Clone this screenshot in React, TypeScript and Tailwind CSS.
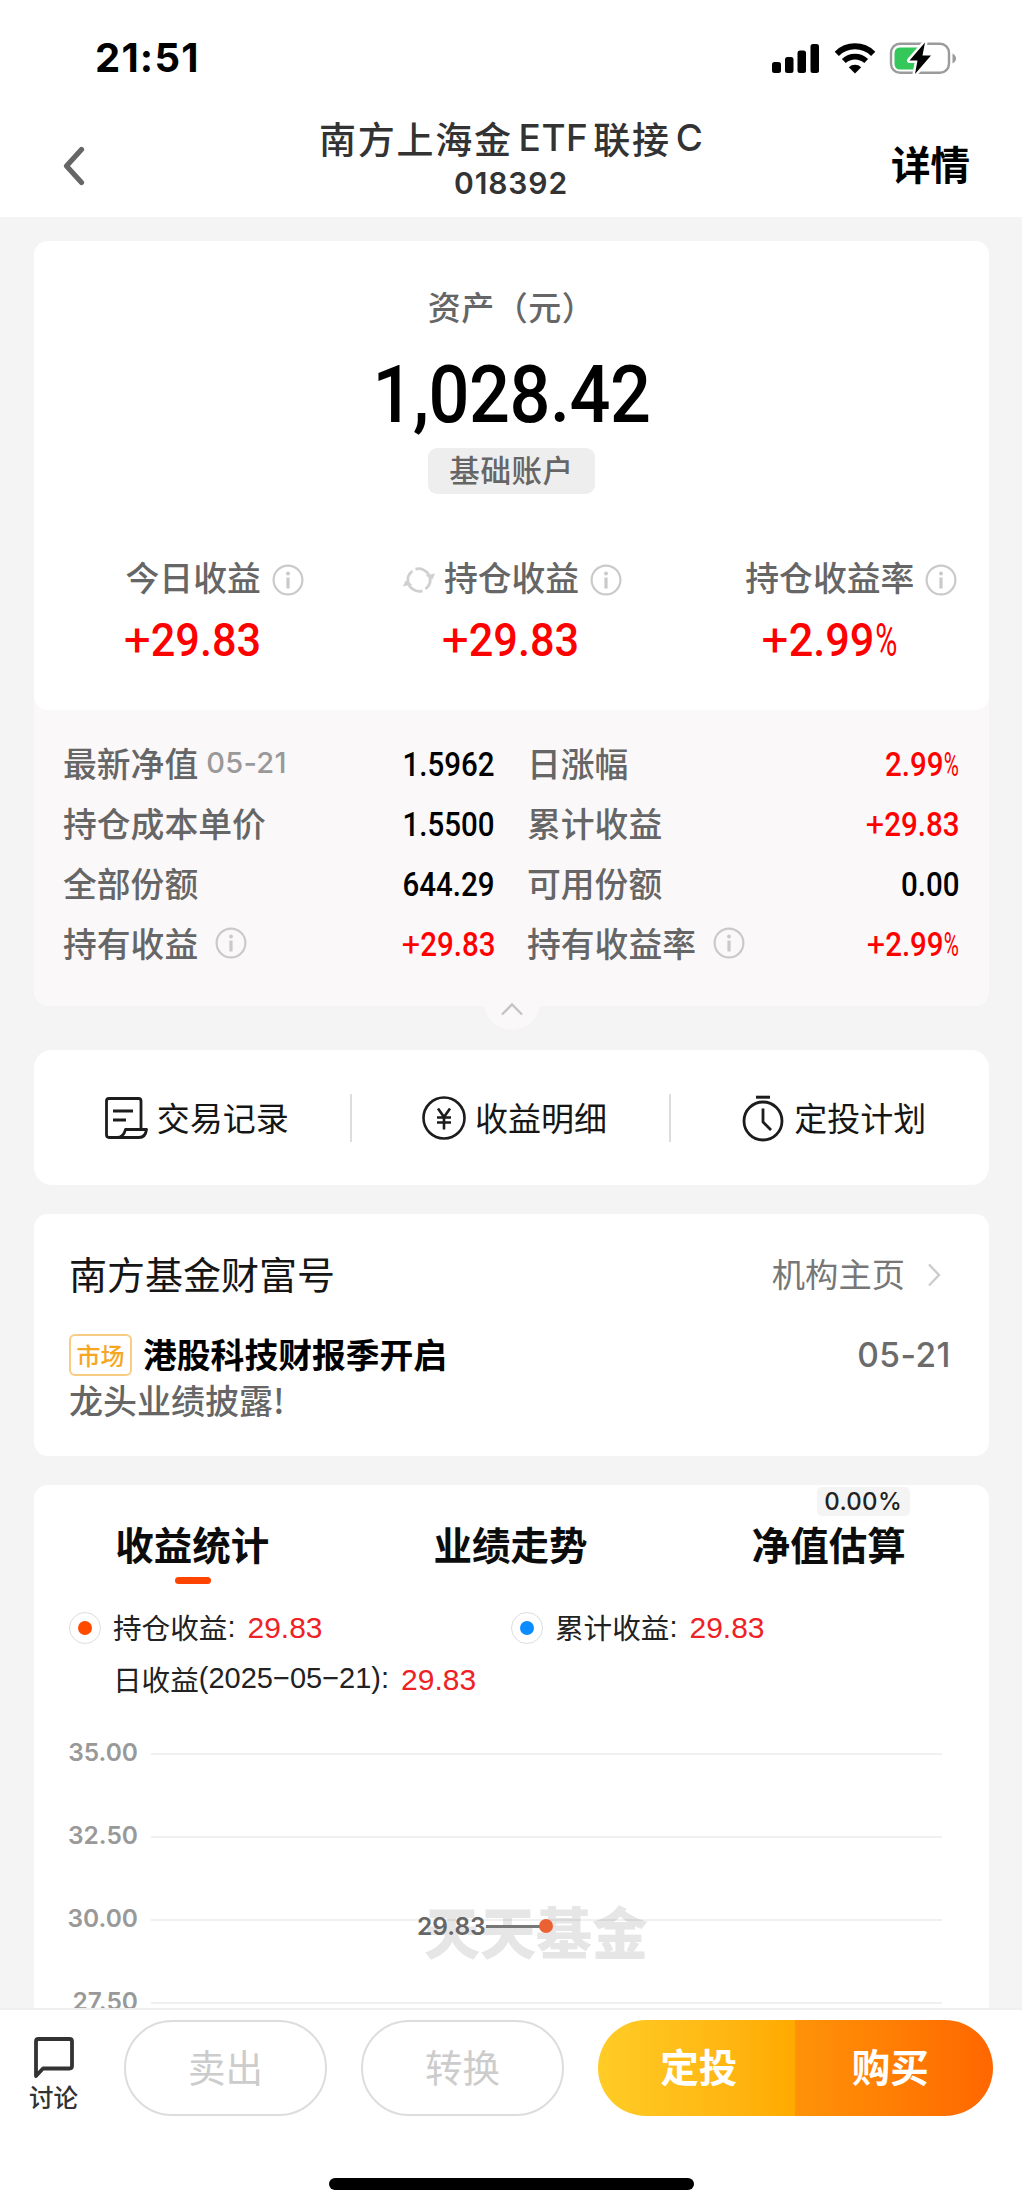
import React from "react";

const CJK = "font-['Noto_Sans_CJK_SC',sans-serif]";
const DIN = "font-[Roboto,sans-serif]";

function InfoIcon({ className = "" }: { className?: string }) {
  return (
    <svg viewBox="0 0 32 32" className={`h-8 w-8 text-[#cacaca] ${className}`} fill="none" stroke="currentColor">
      <circle cx="16" cy="16" r="14.4" strokeWidth="2.2" />
      <path d="M16 13.5V24.5" strokeWidth="3.2" />
      <circle cx="16" cy="9.4" r="2" fill="currentColor" stroke="none" />
    </svg>
  );
}

function RefreshIcon({ className = "" }: { className?: string }) {
  return (
    <svg viewBox="0 0 32 32" className={`h-8 w-8 text-[#d0d0d0] ${className}`} fill="none" stroke="currentColor" strokeWidth="2.800">
      <path d="M5.200 19A11.500 11.500 0 0 1 9.500 7" />
      <path d="M12.500 5.200A11.500 11.500 0 0 1 26 11" />
      <path d="M26.800 13A11.500 11.500 0 0 1 22.500 25" />
      <path d="M19.500 26.800A11.500 11.500 0 0 1 6 21" />
      <path d="M32 9.500 29.500 15.500 22.500 11.500Z" fill="currentColor" stroke="none" />
      <path d="M0 22.500 2.500 16.500 9.500 20.500Z" fill="currentColor" stroke="none" />
    </svg>
  );
}

/* Condensed figures with a light plus sign and a narrow percent sign. */
function Figure({ value }: { value: string }) {
  const plus = value.startsWith("+");
  const percent = value.endsWith("%");
  const digits = value.replace("+", "").replace("%", "");
  return (
    <>
      {plus && <span className="inline-block scale-x-[1.1] pr-[0.03em] font-normal">+</span>}
      {digits}
      {percent && <span className="-mr-[0.1em] -ml-[0.1em] inline-block scale-x-[0.7] font-normal">%</span>}
    </>
  );
}

function StatusBar() {
  return (
    <div className="flex h-[112px] items-start justify-between pl-[95px] pr-[65px]">
      <div className="mt-[36px] text-[40px] leading-[44px] font-bold tracking-[1.2px] text-black">21:51</div>
      <div className="mt-[41px] flex items-center">
        <svg viewBox="0 0 48 32" className="h-8 w-12">
          <rect x="0" y="20" width="9" height="11" rx="2.5" />
          <rect x="13" y="15" width="8.500" height="16" rx="2.500" />
          <rect x="25.500" y="8.500" width="8.500" height="22.500" rx="2.500" />
          <rect x="38.500" y="2" width="8.500" height="29" rx="2.500" />
        </svg>
        <svg viewBox="0 0 42 32" className="ml-[14px] h-8 w-[42px]" fill="none" stroke="black">
          <path d="M2.800 11.800A26 26 0 0 1 39.200 11.800" strokeWidth="6" />
          <path d="M9.800 19A16.500 16.500 0 0 1 32.200 19" strokeWidth="5.600" />
          <path d="M21 31.500 14.800 25.200A9.300 9.300 0 0 1 27.200 25.200Z" fill="black" stroke="none" />
        </svg>
        <svg viewBox="0 0 68 34" className="ml-[13px] h-[34px] w-[68px]">
          <rect x="2" y="2.800" width="58" height="29" rx="9" fill="none" stroke="#9b9b9b" strokeWidth="2.400" />
          <path d="M63.500 12.500V22.500Q67 20.500 67 17.500T63.500 12.500Z" fill="#9b9b9b" />
          <path d="M11 6.500H31V28.500H11Q5.500 28.500 5.500 22.500V12.500Q5.500 6.500 11 6.500Z" fill="#34c759" />
          <path d="M36 1.500 20.500 19.500H28.500L26 33 42 14.500H33.500Z" fill="black" stroke="white" strokeWidth="5" paintOrder="stroke" strokeLinejoin="round" />
        </svg>
      </div>
    </div>
  );
}

function Header() {
  return (
    <div className="flex h-[105px] items-start justify-between pl-[62px] pr-[52px]">
      <div className="w-[190px]">
        <svg viewBox="0 0 24 40" className="mt-[34px] h-10 w-6" fill="none" stroke="#666" strokeWidth="5.200" strokeLinecap="round" strokeLinejoin="round">
          <path d="M19.500 3.500 4.500 20 19.500 36.500" />
        </svg>
      </div>
      <div className="flex flex-col items-center text-[#333]">
        <div className={`${CJK} flex h-[52px] items-center text-[37px] leading-[52px] font-medium tracking-[1.700px]`}>
          南方上海金<span className="ml-[6px] mr-[5px] font-[Inter] text-[37px] font-medium tracking-[0.5px]">ETF</span>联接
          <span className="ml-[5px] font-[Inter] text-[37px] font-medium tracking-normal">C</span>
        </div>
        <div className="mt-[1px] text-[30px] leading-[36px] font-semibold tracking-[0.9px]">018392</div>
      </div>
      <div className={`${CJK} mt-[23px] w-[200px] text-right text-[39.500px] leading-[56px] font-bold text-black`}>详情</div>
    </div>
  );
}

const summary = [
  { label: "今日收益", value: "+29.83", refresh: false },
  { label: "持仓收益", value: "+29.83", refresh: true },
  { label: "持仓收益率", value: "+2.99%", refresh: false },
];

const details = [
  { label: "最新净值", date: "05-21", value: "1.5962" },
  { label: "日涨幅", value: "2.99%", red: true },
  { label: "持仓成本单价", value: "1.5500" },
  { label: "累计收益", value: "+29.83", red: true },
  { label: "全部份额", value: "644.29" },
  { label: "可用份额", value: "0.00" },
  { label: "持有收益", value: "+29.83", red: true, info: true },
  { label: "持有收益率", value: "+2.99%", red: true, info: true },
];

function AssetCard() {
  return (
    <section className="relative mt-6 h-[765px] rounded-[14px] bg-[#fbf8f9]">
      <div className="flex h-[469px] flex-col items-center rounded-[14px] bg-white">
        <div className={`${CJK} mt-[41px] h-[48px] text-[33px] leading-[48px] font-medium tracking-[0.500px] text-[#666]`}>资产（元）</div>
        <div className={`${DIN} mt-[17px] h-[96px] origin-center scale-x-[0.9] text-[80px] leading-[96px] font-medium tracking-[-0.5px] text-black`}>1,028.42</div>
        <div className={`${CJK} mt-[5px] flex h-[46px] w-[167px] items-center justify-center rounded-[9px] bg-[#eee] pb-[5px] text-[30.500px] leading-[40px] font-medium tracking-[0.600px] text-[#666]`}>基础账户</div>
        <div className="mt-[58px] grid w-full grid-cols-3">
          {summary.map((s) => (
            <div key={s.label} className="flex flex-col items-center">
              <div className={`${CJK} relative h-[50px] text-[33.800px] leading-[50px] font-medium whitespace-nowrap text-[#666]`}>
                {s.refresh && <RefreshIcon className="absolute top-[12px] right-full mr-[9px]" />}
                {s.label}
                <InfoIcon className="absolute top-[12px] left-full ml-[11px]" />
              </div>
              <div className={`${DIN} mt-[10px] h-[56px] scale-x-[0.92] text-[47px] leading-[56px] font-medium whitespace-nowrap text-[#ff0000]`}>
                <Figure value={s.value} />
              </div>
            </div>
          ))}
        </div>
      </div>
      <div className="grid grid-cols-[432px_432px] gap-x-[32px] pt-[23px] pl-[29px]">
        {details.map((d) => (
          <div key={d.label} className="flex h-[60px] items-center">
            <span className={`${CJK} text-[33.800px] leading-[50px] font-medium text-[#666]`}>{d.label}</span>
            {d.date && <span className="ml-[8px] text-[29px] leading-[50px] font-medium tracking-[0.300px] text-[#999]">{d.date}</span>}
            {d.info && <InfoIcon className="ml-[17px]" />}
            <span className={`${DIN} mt-[3px] ml-auto origin-right scale-x-[0.88] text-[33.500px] leading-[50px] font-medium whitespace-nowrap ${d.red ? "text-[#ff0000]" : "text-black"}`}>
              <Figure value={d.value} />
            </span>
          </div>
        ))}
      </div>
      <div className="absolute -bottom-[24px] left-[450px] h-[56px] w-[56px] rounded-full bg-[#fbf8f9]">
        <svg viewBox="0 0 24 16" className="mt-[27px] ml-[16px] h-4 w-6" fill="none" stroke="#c4c4c4" strokeWidth="2.400">
          <path d="M2 13.500 12 3.500 22 13.500" />
        </svg>
      </div>
    </section>
  );
}

function RecordIcon() {
  return (
    <svg viewBox="0 0 46 46" className="h-[46px] w-[46px]" fill="none" stroke="#1c1c1c" strokeWidth="2.800" strokeLinejoin="round">
      <path d="M38 33V6Q38 3.500 35.500 3.500H6Q3.500 3.500 3.500 6V39.500Q3.500 42.500 6 42.500H16" />
      <path d="M14 42.500Q20.500 42.500 22.500 34.500H43.500Q42.500 42.500 36 42.500Z" />
      <path d="M10 16H30M10 25H23" />
    </svg>
  );
}

function YenIcon() {
  return (
    <svg viewBox="0 0 46 46" className="h-[46px] w-[46px]" fill="none" stroke="#1c1c1c" strokeWidth="2.600">
      <circle cx="23" cy="23" r="20.500" />
      <path d="M17 13.500 23 22 29 13.500M23 22V34.500M16 22.500H30M16 27.500H30" />
    </svg>
  );
}

function WatchIcon() {
  return (
    <svg viewBox="0 0 46 48" className="h-[48px] w-[46px]" fill="none" stroke="#1c1c1c" strokeWidth="2.800">
      <circle cx="23" cy="27" r="19" />
      <path d="M16 3.200H30" strokeWidth="3" />
      <path d="M23 14.500V28L31 36" />
    </svg>
  );
}

function Actions() {
  const items = [
    { label: "交易记录", icon: <RecordIcon /> },
    { label: "收益明细", icon: <YenIcon /> },
    { label: "定投计划", icon: <WatchIcon /> },
  ];
  return (
    <section className="mt-[44px] grid h-[135px] grid-cols-3 items-center rounded-[18px] bg-white">
      {items.map((it, i) => (
        <div key={it.label} className={`flex h-[48px] items-center justify-center border-[#ddd] pl-[7px] ${i < 2 ? "border-r-[2px]" : ""}`}>
          {it.icon}
          <span className={`${CJK} -mt-[2px] ml-[8px] text-[33px] leading-[48px] text-[#161616]`}>{it.label}</span>
        </div>
      ))}
    </section>
  );
}

function NewsCard() {
  return (
    <section className="mt-[29px] h-[242px] rounded-[14px] bg-white pr-[38px] pl-[35px]">
      <div className="flex h-[120px] items-center justify-between">
        <span className={`${CJK} -mt-[2px] text-[38px] leading-[56px] text-[#161616]`}>南方基金财富号</span>
        <span className="flex items-center">
          <span className={`${CJK} -mt-[2px] text-[33.300px] leading-[48px] text-[#777]`}>机构主页</span>
          <svg viewBox="0 0 16 26" className="mt-[2px] mr-[9px] ml-[21px] h-[26px] w-4" fill="none" stroke="#ccc" strokeWidth="2.400">
            <path d="M3 2.500 13 13 3 23.500" />
          </svg>
        </span>
      </div>
      <div className="flex h-[42px] items-center">
        <span className={`${CJK} flex h-[42px] w-[63px] items-center justify-center rounded-[6px] border-[2px] border-[#f8cc85] text-[24px] leading-[36px] font-medium text-[#f5a623]`}>市场</span>
        <span className={`${CJK} -mt-[2px] ml-[11px] text-[33.800px] leading-[48px] font-bold text-black`}>港股科技财报季开启</span>
        <span className="ml-auto text-[33.500px] leading-[40px] font-medium tracking-[0.5px] text-[#6b6b6b]">05-21</span>
      </div>
      <div className={`${CJK} text-[34px] leading-[48px] font-medium text-[#666]`}>龙头业绩披露!</div>
    </section>
  );
}

function Legend({ color, label, value }: { color: string; label: string; value: string }) {
  return (
    <div className="flex h-[48px] items-center">
      <span className="flex h-[32px] w-[32px] items-center justify-center rounded-full border-[1.500px] border-[#ddd]">
        <span className={`h-[14px] w-[14px] rounded-full ${color}`} />
      </span>
      <span className={`${CJK} -mt-[2px] ml-[12px] text-[28.600px] leading-[44px] text-[#222]`}>{label}</span>
      <span className="-mt-[1px] font-['Liberation_Sans'] text-[29px] text-[#222]">:</span>
      <span className="-mt-[2px] ml-[12px] font-['Liberation_Sans'] text-[30px] text-[#ee2226]">{value}</span>
    </div>
  );
}

function ChartCard() {
  const tabs = ["收益统计", "业绩走势", "净值估算"];
  const ticks = ["35.00", "32.50", "30.00", "27.50"];
  return (
    <section className="mt-[29px] h-[523px] overflow-hidden rounded-t-[14px] bg-white">
      <div className="grid grid-cols-3 pt-[30px]">
        {tabs.map((t, i) => (
          <div key={t} className="relative flex flex-col items-center">
            {i === 2 && (
              <span className="absolute -top-[28px] left-[146px] flex h-[29px] w-[93px] items-center justify-center rounded-[5px] bg-[#f4f4f4] text-[24px] leading-[28px] font-medium tracking-[0.300px] text-[#222]">0.00%</span>
            )}
            <span className={`${CJK} -ml-[2px] h-[62px] text-[38.500px] leading-[56px] font-bold text-[#0c0c0c]`}>{t}</span>
            {i === 0 && <span className="h-[7px] w-[36px] rounded-full bg-[#ff4400]" />}
          </div>
        ))}
      </div>
      <div className="mt-[20px] grid grid-cols-[442px_1fr] pl-[35px]">
        <Legend color="bg-[#ff4b00]" label="持仓收益" value="29.83" />
        <Legend color="bg-[#0a8cff]" label="累计收益" value="29.83" />
      </div>
      <div className="mt-[3px] flex h-[48px] items-center pl-[79px] font-['Liberation_Sans'] text-[29px] text-[#222]">
        <span className={`${CJK} text-[28.600px] leading-[44px]`}>日收益</span>
        <span>(2025−05−21):</span>
        <span className="ml-[12px] text-[30px] text-[#ee2226]">29.83</span>
      </div>
      <div className="relative mt-[30px]">
        <div className={`${CJK} absolute top-[157px] left-[390px] text-[56px] leading-[80px] font-black text-[#e6e6e6]`}>天天基金</div>
        {ticks.map((t) => (
          <div key={t} className="relative flex h-[83px] items-start">
            <span className="w-[104px] text-right text-[24.500px] leading-[38px] font-semibold text-[#999]">{t}</span>
            <span className="mt-[20px] ml-[13px] h-[2px] w-[791px] bg-black/6" />
          </div>
        ))}
        <div className="absolute top-[174px] left-[383px] flex items-center">
          <span className="text-[24.500px] leading-[38px] font-semibold text-[#666]">29.83</span>
          <span className="h-[3px] w-[54px] bg-[#777]" />
          <span className="-ml-[1px] h-[14px] w-[14px] rounded-full bg-[#eb6133]" />
        </div>
      </div>
    </section>
  );
}

function BottomBar() {
  return (
    <div className="relative flex h-[202px] flex-col items-center border-t-2 border-[#f0f0f0] bg-white">
      <div className="flex w-full pt-[10px]">
        <div className="flex w-[124px] flex-col pl-[29px] pt-[15px]">
          <svg viewBox="0 0 46 46" className="ml-[2px] h-[46px] w-[46px]" fill="none" stroke="#333" strokeWidth="3.800" strokeLinejoin="round">
            <path d="M5 41V6.500Q5 4 7.500 4H38.500Q41 4 41 6.500V31Q41 33.500 38.500 33.500H12Z" />
          </svg>
          <span className={`${CJK} -mt-[1px] text-[24.500px] leading-[34px] font-medium text-[#333]`}>讨论</span>
        </div>
        <div className={`${CJK} flex h-[96px] w-[203px] items-center justify-center rounded-full border-2 border-[#ddd] pb-[4px] text-[37.500px] text-[#ccc]`}>卖出</div>
        <div className={`${CJK} ml-[34px] flex h-[96px] w-[203px] items-center justify-center rounded-full border-2 border-[#ddd] pb-[4px] text-[37.500px] text-[#ccc]`}>转换</div>
        <div className={`${CJK} ml-[34px] flex h-[96px] w-[395px] overflow-hidden rounded-full text-[38.500px] font-bold text-white`}>
          <div className="flex flex-1 items-center justify-center bg-linear-to-r from-[#ffcc25] to-[#ffaa00] pb-[4px] pl-[5px]">定投</div>
          <div className="flex flex-1 items-center justify-center bg-linear-to-r from-[#ff9308] to-[#ff6600] pr-[7px] pb-[4px]">购买</div>
        </div>
      </div>
      <div className="mt-[62px] h-[12px] w-[365px] rounded-full bg-black" />
    </div>
  );
}

export default function App() {
  return (
    <div className="h-[2210px] w-[1022px] overflow-hidden bg-[#f4f4f4] font-[Inter,'Noto_Sans_CJK_SC',sans-serif]">
      <div className="bg-white">
        <StatusBar />
        <Header />
      </div>
      <main className="pr-[33px] pl-[34px]">
        <AssetCard />
        <Actions />
        <NewsCard />
        <ChartCard />
      </main>
      <BottomBar />
    </div>
  );
}
